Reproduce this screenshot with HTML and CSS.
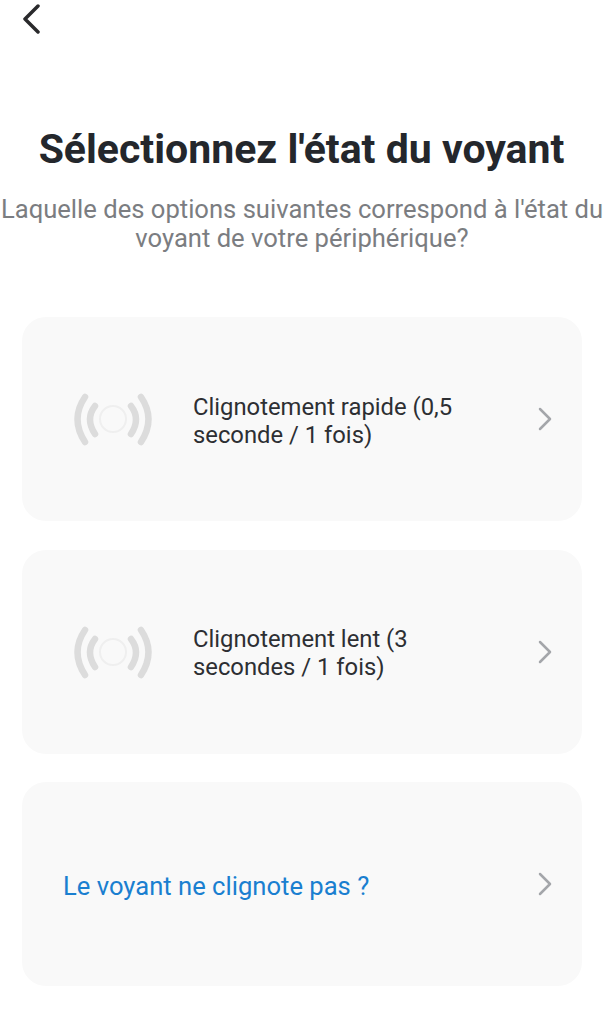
FILE: index.html
```html
<!DOCTYPE html>
<html lang="fr">
<head>
  <meta charset="UTF-8">
  <title>Sélectionnez l'état du voyant</title>
  <link rel="stylesheet" href="styles.css">
</head>
<body>
  <div class="topbar">
    <svg class="back" width="22" height="34" viewBox="0 0 22 34">
      <path d="M16 6 L3 19 L16 32"/>
    </svg>
  </div>
  <h1>Sélectionnez l'état du voyant</h1>
  <p class="sub">Laquelle des options suivantes correspond à l'état du voyant de votre périphérique?</p>

  <div class="list">
    <div class="card">
      <svg class="signal" width="84" height="56" viewBox="0 0 84 56">
        <circle cx="42" cy="28" r="13"/>
        <path class="wave" d="M14 6 Q-1 28 14 51"/>
        <path class="wave" d="M24 15 Q14 28 24 43"/>
        <path class="wave" d="M60 15 Q70 28 60 43"/>
        <path class="wave" d="M70 6 Q85 28 70 51"/>
      </svg>
      <div class="label">Clignotement rapide (0,5 seconde / 1 fois)</div>
      <svg class="chev" width="14" height="24" viewBox="0 0 14 24">
        <path d="M2 2 L12 12 L2 22"/>
      </svg>
    </div>
    <div class="card">
      <svg class="signal" width="84" height="56" viewBox="0 0 84 56">
        <circle cx="42" cy="28" r="13"/>
        <path class="wave" d="M14 6 Q-1 28 14 51"/>
        <path class="wave" d="M24 15 Q14 28 24 43"/>
        <path class="wave" d="M60 15 Q70 28 60 43"/>
        <path class="wave" d="M70 6 Q85 28 70 51"/>
      </svg>
      <div class="label">Clignotement lent (3 secondes / 1 fois)</div>
      <svg class="chev" width="14" height="24" viewBox="0 0 14 24">
        <path d="M2 2 L12 12 L2 22"/>
      </svg>
    </div>
    <div class="card plain">
      <div class="link">Le voyant ne clignote pas ?</div>
      <svg class="chev" width="14" height="24" viewBox="0 0 14 24">
        <path d="M2 2 L12 12 L2 22"/>
      </svg>
    </div>
  </div>
</body>
</html>
```
FILE: styles.css
```css
body {
  margin: 0;
  background: #fff;
  font-family: Roboto, "Liberation Sans", sans-serif;
  color: #24272c;
}
.topbar {
  height: 126px;
  padding-left: 22px;
}
.back {
  display: block;
}
.back path {
  fill: none;
  stroke: #2a2a2c;
  stroke-width: 3.5;
  stroke-linecap: round;
  stroke-linejoin: round;
}
h1 {
  margin: 0;
  padding-right: 5px;
  font-size: 41px;
  line-height: 46px;
  font-weight: 700;
  text-align: center;
}
.sub {
  margin: 23px -2px 0 -6px;
  font-size: 25.6px;
  line-height: 29px;
  color: #7b7d81;
  text-align: center;
}
.list {
  margin-top: 64px;
  padding: 0 26px 0 22px;
  display: flex;
  flex-direction: column;
  gap: 28.5px;
}
.card {
  height: 204px;
  background: #f9f9f9;
  border-radius: 24px;
  display: flex;
  align-items: center;
  padding: 0 30px 0 49px;
}
.card.plain {
  padding-left: 41px;
}
.signal {
  flex: none;
  margin-right: 38px;
  overflow: visible;
}
.signal circle {
  fill: none;
  stroke: #efefef;
  stroke-width: 2;
}
.signal .wave {
  fill: none;
  stroke: #dcdcdc;
  stroke-width: 6.5;
  stroke-linecap: round;
}
.label {
  flex: 1;
  font-size: 23.8px;
  line-height: 28px;
  color: #2d2f33;
  padding-right: 40px;
  padding-top: 3px;
}
.link {
  flex: 1;
  font-size: 25.6px;
  line-height: 28px;
  color: #1a7fd0;
  padding-top: 3px;
}
.chev {
  flex: none;
}
.chev path {
  fill: none;
  stroke: #a4a6aa;
  stroke-width: 2.5;
  stroke-linecap: round;
  stroke-linejoin: round;
}
```
